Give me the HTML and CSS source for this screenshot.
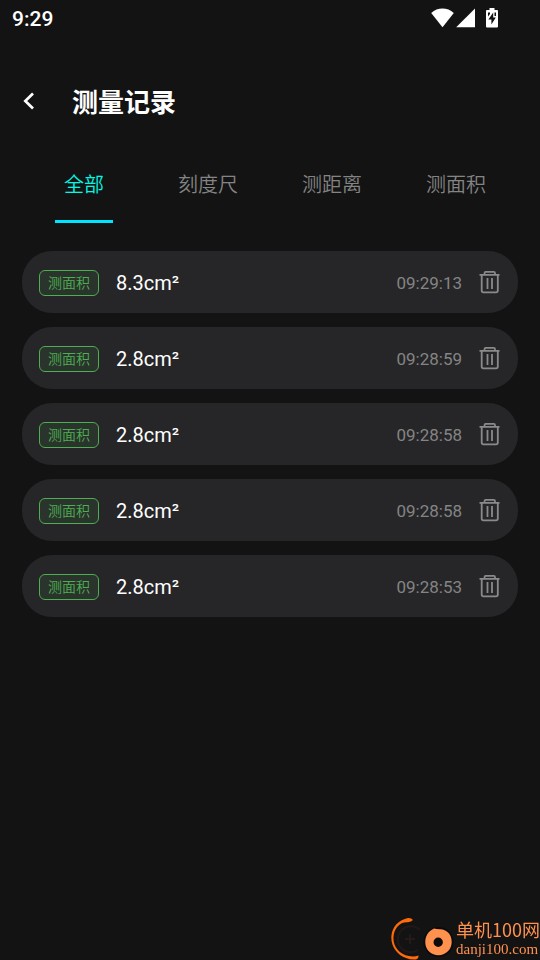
FILE: index.html
```html
<!DOCTYPE html>
<html lang="zh-CN">
<head>
<meta charset="utf-8">
<meta name="viewport" content="width=device-width, initial-scale=1">
<title>测量记录</title>
<link rel="stylesheet" href="styles.css">
</head>
<body>
<svg class="sprite" aria-hidden="true">
  <symbol id="trash" viewBox="0 0 22 24">
    <g fill="none" stroke="currentColor" stroke-width="1.800">
      <path d="M.5 3.800H20.500M5.500 3.500V2.200Q5.500 .9 6.800 .9H14.800Q16 .9 16 2.200V3.500"/>
      <path d="M2.700 4V19.500Q2.700 21.300 4.500 21.300H17Q18.800 21.300 18.800 19.500V4"/>
      <path d="M8.500 7V18M13 7V18"/>
    </g>
  </symbol>
</svg>
<div class="status">
  <span class="clock">9:29</span>
  <div class="signals">
    <svg width="24" height="20" viewBox="0 0 24 20" fill="#fff"><path d="M12.500 19.200L1.200 5Q6.200 .6 12.500 .6T23.800 5Z"/></svg>
    <svg width="20" height="20" viewBox="0 0 20 20" fill="#fff"><path d="M20 .4V19.200H1.200Z"/></svg>
    <svg class="battery" width="12" height="20" viewBox="0 0 12 20"><path fill="#fff" d="M3.500 0H8.500V2H11Q12 2 12 3V18.500Q12 19.500 11 19.500H1Q0 19.500 0 18.500V3Q0 2 1 2H3.500Z"/><path fill="#131313" d="M7.200 4.500L2.400 11.500H5.400V16.500L9.800 9.500H7.200ZM2 4.500H4V6L2 8.500ZM8.500 4.500H10V8H8.500Z"/></svg>
  </div>
</div>
<header class="header">
  <button class="back" aria-label="返回"><svg width="12" height="18" viewBox="0 0 12 18"><path d="M11 1.500L3.300 9L11 16.500" fill="none" stroke="#fff" stroke-width="2.700"/></svg></button>
  <h1>测量记录</h1>
</header>
<nav class="tabs">
  <button class="tab active">全部</button>
  <button class="tab">刻度尺</button>
  <button class="tab">测距离</button>
  <button class="tab">测面积</button>
</nav>
<main>
  <ul class="records">
    <li class="record"><span class="tag">测面积</span><span class="value">8.3cm²</span><time>09:29:13</time><button class="delete" aria-label="删除"><svg width="22" height="24"><use href="#trash"/></svg></button></li>
    <li class="record"><span class="tag">测面积</span><span class="value">2.8cm²</span><time>09:28:59</time><button class="delete" aria-label="删除"><svg width="22" height="24"><use href="#trash"/></svg></button></li>
    <li class="record"><span class="tag">测面积</span><span class="value">2.8cm²</span><time>09:28:58</time><button class="delete" aria-label="删除"><svg width="22" height="24"><use href="#trash"/></svg></button></li>
    <li class="record"><span class="tag">测面积</span><span class="value">2.8cm²</span><time>09:28:58</time><button class="delete" aria-label="删除"><svg width="22" height="24"><use href="#trash"/></svg></button></li>
    <li class="record"><span class="tag">测面积</span><span class="value">2.8cm²</span><time>09:28:53</time><button class="delete" aria-label="删除"><svg width="22" height="24"><use href="#trash"/></svg></button></li>
  </ul>
</main>
<aside class="watermark">
  <svg width="64" height="44" viewBox="0 0 64 44">
    <path d="M27 34A13 13 0 1 1 29 14" fill="none" stroke="#201918" stroke-width="2"/>
    <path d="M19 18V28M14 23H24" stroke="#241b19" stroke-width="2"/>
    <path fill="#ff6a0a" d="M22 4Q20 1.500 16 2.300C8 4 1 11 .4 20C-.4 30 6 39 15 42Q20 44 25 43.500Q28 42.500 27.500 39.500Q23 41 18 40C8 38 1.800 30 2.500 21C3 12 9 5.500 17 6.200Q20 6 22 4Z"/>
    <circle cx="47.500" cy="26" r="15" fill="#0c0a0a"/>
    <path fill="#ff914f" fill-rule="evenodd" d="M43 12.500Q46 13.500 50 13.300C57 14 61 19.500 60.700 26.500C60.500 33.500 54.500 39.300 47.500 39.300C40.500 39.300 34.500 34 34.300 27C34 20 37 15.500 43 12.500ZM47.200 21.500A4.700 4.700 0 1 0 47.200 30.900A4.700 4.700 0 1 0 47.200 21.500Z"/>
  </svg>
  <div class="site"><span class="site-name">单机100网</span><span class="site-url">danji100.com</span></div>
</aside>
</body>
</html>
```
FILE: styles.css
```css
* {
  box-sizing: border-box;
}

body {
  margin: 0;
  min-height: 100vh;
  background: #131313;
  color: #fff;
  font-family: Roboto, "Noto Sans CJK SC", sans-serif;
}

button {
  padding: 0;
  border: 0;
  background: none;
  color: inherit;
  font: inherit;
  cursor: pointer;
}

svg {
  display: block;
}

.sprite {
  position: absolute;
  width: 0;
  height: 0;
}

.status {
  display: flex;
  justify-content: space-between;
  align-items: center;
  height: 36px;
  padding: 0 42px 0 12px;
}

.clock {
  padding-top: 2px;
  font-size: 21px;
  font-weight: 500;
}

.signals {
  display: flex;
  align-items: center;
  gap: 1px;
}

.battery {
  margin-left: 10px;
}

.header {
  display: flex;
  align-items: center;
  gap: 38px;
  height: 130px;
  padding: 0 22px;
}

.header h1 {
  margin: 0;
  padding-top: 4px;
  font-size: 26px;
  line-height: 36px;
  font-weight: 700;
}

.tabs {
  display: grid;
  grid-template-columns: repeat(4, 1fr);
  margin: 0 22px;
}

.tab {
  display: flex;
  flex-direction: column;
  align-items: center;
  gap: 16px;
  color: #848484;
  font-size: 20px;
  line-height: 38px;
  font-weight: 350;
}

.tab::after {
  content: "";
  width: 58px;
  height: 3px;
}

.tab.active {
  color: #00fae6;
}

.tab.active::after {
  background: #00e5ff;
}

.records {
  display: flex;
  flex-direction: column;
  gap: 14px;
  margin: 0;
  padding: 28px 22px;
  list-style: none;
}

.record {
  display: flex;
  align-items: center;
  height: 62px;
  padding: 2px 17px 0;
  border-radius: 30px;
  background: #262628;
}

.tag {
  padding: 0 8px;
  border: 1px solid #4caf50;
  border-radius: 6px;
  background: #2a332c;
  color: #4caf50;
  font-size: 14px;
  line-height: 24px;
  font-weight: 350;
}

.value {
  flex: 1;
  margin-left: 17px;
  font-size: 20px;
}

time {
  color: #848484;
  font-size: 17px;
}

.delete {
  margin-left: 17px;
  color: #8a8a8a;
}

.watermark {
  position: fixed;
  right: 0;
  bottom: 0;
  display: flex;
  align-items: center;
  gap: 1px;
  color: #ff914f;
}

.site {
  display: flex;
  flex-direction: column;
  gap: 1px;
}

.site-name {
  font-family: "Noto Sans CJK SC", sans-serif;
  font-size: 18px;
  line-height: 22px;
}

.site-url {
  font-family: "Liberation Serif", serif;
  font-size: 15px;
  line-height: 17px;
}
```
